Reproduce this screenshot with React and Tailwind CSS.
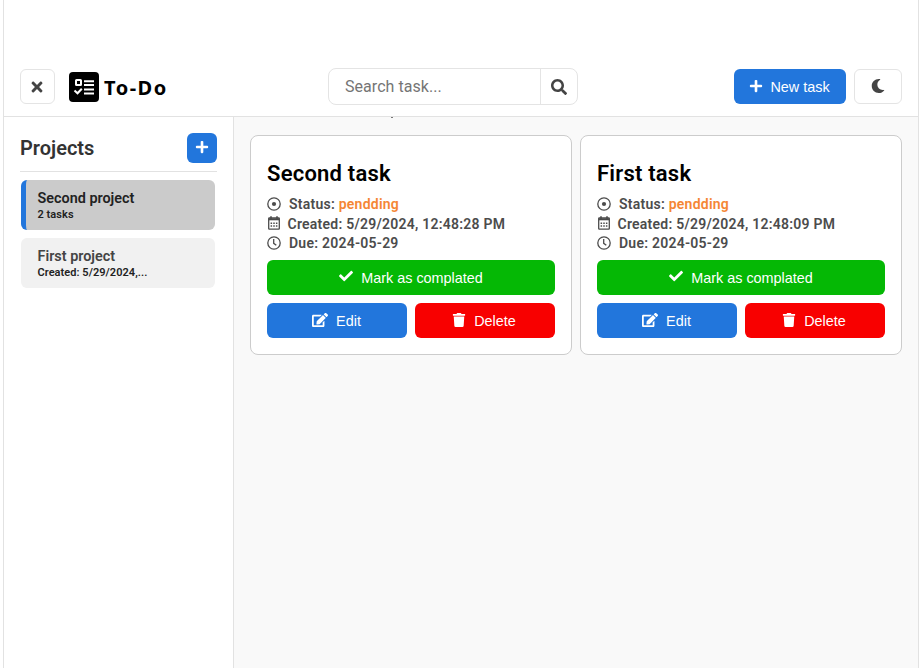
import React from "react";
import { FaTimes, FaSearch, FaPlus, FaMoon, FaCheck, FaEdit, FaTrash } from "react-icons/fa";

function Logo() {
  return (
    <svg viewBox="0 0 30 30" className="h-[30px] w-[30px]" fill="none" stroke="#fff" strokeWidth="2">
      <rect width="30" height="30" rx="4" fill="#000" stroke="none" />
      <rect x="7" y="8" width="5" height="5" rx="0.5" />
      <path d="M15 9.3h10M15 13h10M15 17.6h10M15 21.4h10M5.5 18.6l3 2.7 4.3-4.6" />
    </svg>
  );
}

function StatusIcon() {
  return (
    <svg viewBox="0 0 14 14" className="h-[14px] w-[14px]" fill="none" stroke="currentColor" strokeWidth="1.3">
      <circle cx="7" cy="7" r="6.2" />
      <circle cx="7" cy="7" r="2.1" fill="currentColor" stroke="none" />
    </svg>
  );
}

function Clock() {
  return (
    <svg viewBox="0 0 14 14" className="h-[14px] w-[14px]" fill="none" stroke="currentColor" strokeWidth="1.3">
      <circle cx="7" cy="7" r="6.2" />
      <path d="M6.7 3v4.3l2.6 1.9" />
    </svg>
  );
}

function Calendar() {
  return (
    <svg viewBox="0 0 12 14" className="-mt-[2px] h-[14px] w-[12px]" fill="none" stroke="currentColor" strokeWidth="1.3">
      <rect x="0.7" y="2" width="10.6" height="11.2" rx="0.6" />
      <path d="M0.7 3.3h10.6" strokeWidth="2" />
      <path d="M3 0.3v3M9 0.3v3" strokeWidth="1.6" />
      <path d="M2.6 7.2h1.5M5.25 7.2h1.5M7.9 7.2h1.5M2.6 10h1.5M5.25 10h1.5M7.9 10h1.5" strokeWidth="1.5" />
    </svg>
  );
}

function TaskCard({ title, created }) {
  return (
    <article className="h-[220px] w-[322px] rounded-lg border border-[#ccc] bg-white px-4 pt-[24px]">
      <h2 className="h-7 text-[22px] leading-7 font-semibold tracking-[0.22px] text-black">{title}</h2>
      <div className="mt-[6px] text-[14px] font-semibold tracking-[0.24px] text-[#4c4c4c]">
        <div className="flex h-5 items-center gap-2">
          <StatusIcon />
          <span>Status: <span className="text-[#f58634]">pendding</span></span>
        </div>
        <div className="flex h-5 items-center gap-2 pl-[0.5px]">
          <Calendar />
          <span>Created: {created}</span>
        </div>
        <div className="flex h-[18px] items-center gap-2">
          <Clock />
          <span>Due: 2024-05-29</span>
        </div>
      </div>
      <div className="mt-2 grid grid-cols-2 gap-2 font-['Liberation_Sans',sans-serif] text-[14.4px] text-white">
        <button className="col-span-2 flex h-[35px] items-center justify-center gap-2 rounded-md bg-[#05b805]">
          <FaCheck className="-mt-[3px] h-[14px] w-[14px]" />
          <span className="pt-[2px]">Mark as complated</span>
        </button>
        <button className="flex h-[35px] items-center justify-center gap-2 rounded-md bg-[#2276dc] pr-px">
          <FaEdit className="-mt-[2px] h-4 w-4" />
          <span className="pt-[2px]">Edit</span>
        </button>
        <button className="flex h-[35px] items-center justify-center gap-2 rounded-md bg-[#f80000] pr-[2px]">
          <FaTrash className="-mt-[2px] h-[14px] w-[14px]" />
          <span className="pt-[2px]">Delete</span>
        </button>
      </div>
    </article>
  );
}

function Project({ name, detail, active }) {
  return (
    <div className={"flex h-[50px] w-[194px] flex-col overflow-hidden rounded-md border-l-[5px] pt-[10px] pl-[11.5px] font-semibold " + (active ? "border-[#2276dc] bg-[#cbcbcb]" : "border-[#f1f1f1] bg-[#f1f1f1]")}>
      <span className={"text-[14.4px] leading-[18px] " + (active ? "text-[#222]" : "text-[#444]")}>{name}</span>
      <span className="text-[11px] leading-[14px] tracking-[0.05px] text-[#222]">{detail}</span>
    </div>
  );
}

export default function App() {
  return (
    <div className="h-[668px] w-[921px] overflow-hidden bg-white pl-[3px] font-[Roboto,sans-serif]">
      <div className="flex h-full w-[916px] flex-col border-x border-[#e2e2e2]">
        <header className="flex h-[117px] shrink-0 items-end border-b border-[#e2e2e2] pb-3 pl-4">
          <button className="flex h-[35px] w-[35px] items-center justify-center rounded-md border border-[#e4e4e4] pr-px text-[#444]">
            <FaTimes className="h-4 w-4" />
          </button>
          <div className="ml-[14px] flex h-[35px] w-[259px] items-center gap-[5px]">
            <Logo />
            <span className="pt-[2px] font-['Noto_Sans',sans-serif] text-[20px] font-bold tracking-[1.5px] text-black">To-Do</span>
          </div>
          <div className="-mb-px flex h-[37px] w-[250px] rounded-lg border border-[#e4e4e4]">
            <div className="flex flex-1 items-center border-r border-[#e4e4e4] pl-4 text-[16px] tracking-[0.05px] text-[#757575]">Search task...</div>
            <button className="flex w-9 items-center justify-center text-[#444]"><FaSearch className="h-4 w-4" /></button>
          </div>
          <button className="ml-[156px] flex h-[35px] w-[112px] items-center justify-center gap-[7px] rounded-md bg-[#2276dc] pr-px font-['Liberation_Sans',sans-serif] text-[14.4px] text-white">
            <FaPlus className="-mt-[2px] h-[14px] w-[14px]" />
            <span className="pt-[2px]">New task</span>
          </button>
          <button className="ml-2 flex h-[35px] w-12 items-center justify-center rounded-md border border-[#e4e4e4] pr-px pb-px text-[#444]">
            <FaMoon className="h-[14px] w-[14px]" />
          </button>
        </header>
        <div className="flex min-h-0 flex-1">
          <aside className="w-[230px] border-r border-[#e2e2e2] pt-4 pl-4">
            <div className="flex h-[39px] w-[197px] items-start justify-between border-b border-[#e2e2e2]">
              <h1 className="text-[20px] leading-[30px] font-semibold text-[#333]">Projects</h1>
              <button className="flex h-[30px] w-[30px] items-center justify-center rounded-md bg-[#2276dc] text-white">
                <FaPlus className="-mt-[2px] h-[14px] w-[14px]" />
              </button>
            </div>
            <div className="mt-2 ml-px flex flex-col gap-2">
              <Project name="Second project" detail="2 tasks" active />
              <Project name="First project" detail="Created: 5/29/2024,..." />
            </div>
          </aside>
          <main className="flex-1 bg-[#f9f9f9]">
            <div className="h-[18px] pl-[157px]"><div className="h-px w-[2px] bg-[#777]" /></div>
            <div className="flex gap-2 pl-4">
              <TaskCard title="Second task" created="5/29/2024, 12:48:28 PM" />
              <TaskCard title="First task" created="5/29/2024, 12:48:09 PM" />
            </div>
          </main>
        </div>
      </div>
    </div>
  );
}
